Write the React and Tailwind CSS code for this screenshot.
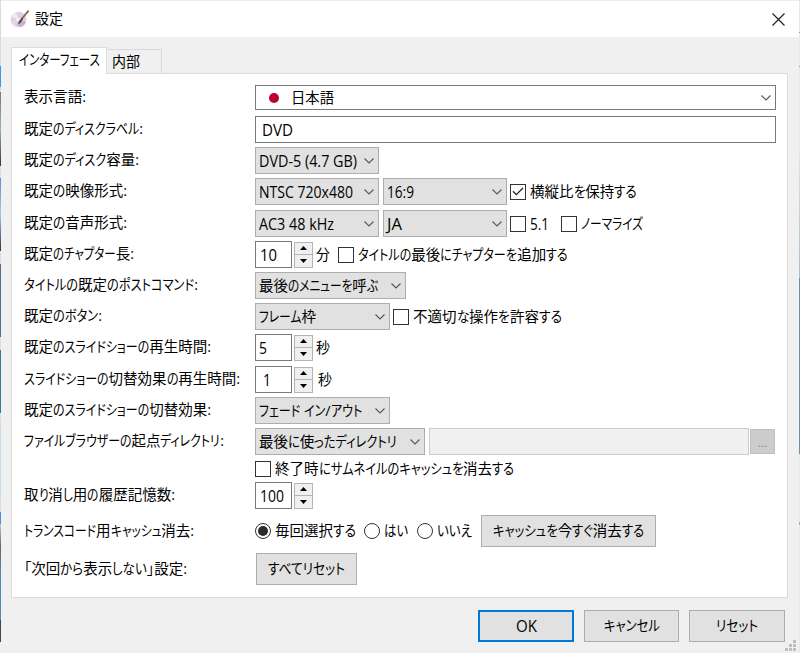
import { useLayoutEffect, useRef } from "react";

const KANA = /([\u3040-\u30ff]+)/;
const CJK = /[\u3000-\u9fff]/;

// One line of text set to a given width: kana runs are condensed, kanji keep their full width.
function T({ children, w, className = "" }) {
  const ref = useRef(null);
  const parts = children.split(KANA).filter(Boolean);
  const hasKana = KANA.test(children);
  const latin = !CJK.test(children) && children !== "...";

  useLayoutEffect(() => {
    const spans = [...ref.current.children];
    const inner = spans.map((s) => s.firstChild);
    inner.forEach((s) => {
      s.style.transform = "";
    });
    const widths = inner.map((s) => s.getBoundingClientRect().width);
    let flexible = 0;
    let fixed = 0;
    parts.forEach((p, i) => {
      if (!hasKana || KANA.test(p)) flexible += widths[i];
      else fixed += widths[i];
    });
    const scale = (w - fixed) / flexible;
    parts.forEach((p, i) => {
      if (!hasKana || KANA.test(p)) {
        inner[i].style.transform = `scaleX(${scale})`;
        spans[i].style.width = `${widths[i] * scale}px`;
      }
    });
  }, []);

  return (
    <span
      ref={ref}
      style={{ width: w }}
      className={`inline-flex shrink-0 whitespace-pre leading-5 ${latin ? "text-[15.5px]" : ""} ${className}`}
    >
      {parts.map((p, i) => (
        <span key={i} className="block shrink-0">
          <span className="inline-block origin-left whitespace-pre [font-feature-settings:'palt']">{p}</span>
        </span>
      ))}
    </span>
  );
}

function Chevron({ className = "" }) {
  return (
    <svg className={`ml-auto shrink-0 ${className}`} width="10" height="6" viewBox="0 0 10 6" fill="none" stroke="#555" strokeWidth="1.1">
      <path d="M.5 .5 5 5 9.5 .5" />
    </svg>
  );
}

function Select({ children, w, className }) {
  return (
    <div className={`flex h-[27px] shrink-0 items-center border border-[#adadad] bg-[#e1e1e1] pl-[3px] pr-1 ${className}`}>
      <T w={w}>{children}</T>
      <Chevron />
    </div>
  );
}

function Check({ children, w, checked, className = "" }) {
  return (
    <label className={`flex items-center gap-[4px] ${className}`}>
      <span className="flex size-4 shrink-0 items-center justify-center border border-[#333] bg-white">
        {checked && (
          <svg width="12" height="9" viewBox="0 0 12 9" fill="none" stroke="#222" strokeWidth="1.3">
            <path d="M1 4.2 4.3 7.6 11 1" />
          </svg>
        )}
      </span>
      <T w={w}>{children}</T>
    </label>
  );
}

function Radio({ children, w, checked, className = "" }) {
  return (
    <label className={`flex items-center gap-[4px] ${className}`}>
      <span className="flex size-4 shrink-0 items-center justify-center rounded-full border border-[#333] bg-white">
        {checked && <span className="size-[10px] rounded-full bg-[#2b2b2b]" />}
      </span>
      <T w={w}>{children}</T>
    </label>
  );
}

function Spin({ children, w, className = "" }) {
  return (
    <div className="flex items-center gap-[2px]">
      <div className={`flex h-[27px] w-[37px] items-center border border-[#7a7a7a] bg-white ${className}`}>
        <T w={w}>{children}</T>
      </div>
      <div className="flex h-[26px] w-[19px] flex-col border border-[#b4b4b4] bg-[#f0f0f0]">
        <div className="flex flex-1 items-center justify-center border-b border-[#b4b4b4]">
          <svg width="7" height="4" viewBox="0 0 7 4"><path d="M0 4 3.5 0 7 4Z" /></svg>
        </div>
        <div className="flex flex-1 items-center justify-center">
          <svg width="7" height="4" viewBox="0 0 7 4"><path d="M0 0H7L3.5 4Z" /></svg>
        </div>
      </div>
    </div>
  );
}

function Button({ children, w, className = "border border-[#adadad]" }) {
  return (
    <button className={`flex h-8 shrink-0 items-center justify-center bg-[#e1e1e1] ${className}`}>
      <T w={w}>{children}</T>
    </button>
  );
}

function Row({ label, w, children, className = "mb-1 h-[27px]" }) {
  return (
    <div className={`flex shrink-0 items-center ${className}`}>
      <div className="flex w-[231px] shrink-0 items-center pb-px">{label && <T w={w}>{label}</T>}</div>
      {children}
    </div>
  );
}

function AppIcon() {
  return (
    <svg width="20" height="18" viewBox="0 0 20 18">
      <circle cx="8.5" cy="9.5" r="7.8" fill="#ddd0e4" />
      <path d="M8.5 9.5 1 6.5A8 8 0 0 1 6 2Z" fill="#f0e9f2" />
      <path d="M8.5 9.5 16 12A8 8 0 0 1 9 17.3Z" fill="#c9aed6" />
      <path d="M8.5 9.5 1 12A8 8 0 0 0 5 16.6Z" fill="#e6d4ea" />
      <circle cx="8" cy="9.5" r="1.8" fill="#f7f4f8" />
      <path d="M18.6 0.6 12 8.6" stroke="#84644e" strokeWidth="1.7" />
      <path d="M12 7.4 9.2 11 7.4 15 10.8 12.6 13.2 9Z" fill="#5c443b" />
    </svg>
  );
}

export default function App() {
  return (
    <div className="flex h-[653px] w-[800px] overflow-hidden bg-[#f0f0f0] font-['Open_Sans','Noto_Sans_CJK_JP',sans-serif] text-[14.5px] text-black">
      <div className="flex w-px shrink-0 flex-col">
        <div className="h-[66px] bg-[#dedad5]" />
        <div className="h-[21px] bg-[#3b98ee]" />
        <div className="h-[5px] bg-[#ddd]" />
        <div className="h-[74px] bg-gradient-to-b from-[#777] via-[#9ab3bd] to-[#34363c]" />
        <div className="h-[12px] bg-[#ddd]" />
        <div className="h-[73px] bg-gradient-to-b from-[#4e91d0] via-[#aac7e5] to-[#303648]" />
        <div className="h-[13px] bg-[#ddd]" />
        <div className="h-[73px] bg-[#526c94]" />
        <div className="h-[13px] bg-[#ddd]" />
        <div className="h-[63px] bg-[#347da0]" />
        <div className="h-[13px] bg-[#ddd]" />
        <div className="h-[72px] bg-[#c4dce7]" />
        <div className="h-[14px] bg-[#ddd]" />
        <div className="h-[12px] bg-[#4a90d8]" />
        <div className="h-[48px] bg-gradient-to-b from-[#c8c8c8] via-[#6c6156] to-[#5288b5]" />
        <div className="h-[48px] bg-[#4b8cb8]" />
        <div className="h-[22px] bg-[#454545]" />
      </div>

      <div className="flex min-w-0 flex-1 flex-col border-t border-[#ececec]">
        <div className="flex h-9 shrink-0 items-center bg-white pl-[9px] pr-[14px]">
          <AppIcon />
          <T w={28} className="ml-[5px]">設定</T>
          <svg className="ml-auto" width="13" height="13" viewBox="0 0 13 13" stroke="#222" strokeWidth="1.2">
            <path d="M.5 .5 12.5 12.5M12.5 .5 .5 12.5" />
          </svg>
        </div>

        <div className="mt-[10px] flex h-[26px] shrink-0 items-end pl-[10px]">
          <div className="z-10 -mb-px flex h-[27px] w-[96px] items-center border border-b-0 border-[#dcdcdc] bg-white pb-[2px] pl-[7px]">
            <T w={81}>インターフェース</T>
          </div>
          <div className="flex h-[24px] w-[55px] items-center border border-b-0 border-l-0 border-[#d9d9d9] bg-[#f0f0f0] pl-[5px] pt-px">
            <T w={28}>内部</T>
          </div>
        </div>

        <div className="ml-[10px] mr-[11px] flex h-[525px] shrink-0 flex-col border border-[#dcdcdc] bg-white pl-[12px] pt-[11px]">
          <Row label="表示言語:" w={62} className="mb-[6px] h-[25px]">
            <div className="flex h-[25px] w-[521px] items-center border border-[#7a7a7a] bg-white pl-[13px] pr-[4px]">
              <span className="size-[10px] rounded-full bg-[#bc0030]" />
              <T w={43} className="ml-[12px]">日本語</T>
              <Chevron />
            </div>
          </Row>
          <Row label="既定のディスクラベル:" w={119}>
            <div className="flex h-[27px] w-[521px] items-center border border-[#7a7a7a] bg-white pl-[6px]">
              <T w={31}>DVD</T>
            </div>
          </Row>
          <Row label="既定のディスク容量:" w={115}>
            <Select w={98} className="w-[124px]">DVD-5 (4.7 GB)</Select>
          </Row>
          <Row label="既定の映像形式:" w={103} className="mb-[5px] h-[27px]">
            <Select w={94} className="w-[124px]">NTSC 720x480</Select>
            <Select w={27} className="ml-1 w-[124px]">16:9</Select>
            <Check checked w={107} className="ml-[3px]">横縦比を保持する</Check>
          </Row>
          <Row label="既定の音声形式:" w={103}>
            <Select w={75} className="w-[124px]">AC3 48 kHz</Select>
            <Select w={15} className="ml-1 w-[124px]">JA</Select>
            <Check w={19} className="ml-[3px]">5.1</Check>
            <Check w={62} className="ml-[12px]">ノーマライズ</Check>
          </Row>
          <Row label="既定のチャプター長:" w={110}>
            <Spin w={17} className="pl-1">10</Spin>
            <T w={14} className="ml-[3px]">分</T>
            <Check w={210} className="ml-2">タイトルの最後にチャプターを追加する</Check>
          </Row>
          <Row label="タイトルの既定のポストコマンド:" w={174}>
            <Select w={119} className="w-[151px]">最後のメニューを呼ぶ</Select>
          </Row>
          <Row label="既定のボタン:" w={78}>
            <Select w={57} className="w-[135px]">フレーム枠</Select>
            <Check w={149} className="ml-[3px]">不適切な操作を許容する</Check>
          </Row>
          <Row label="既定のスライドショーの再生時間:" w={187} className="mb-[5px] h-[27px]">
            <Spin w={8} className="pl-[3px]">5</Spin>
            <T w={14} className="ml-[3px]">秒</T>
          </Row>
          <Row label="スライドショーの切替効果の再生時間:" w={216}>
            <Spin w={8} className="pl-[7px]">1</Spin>
            <T w={14} className="ml-[5px]">秒</T>
          </Row>
          <Row label="既定のスライドショーの切替効果:" w={187}>
            <Select w={103} className="w-[135px]">フェード イン/アウト</Select>
          </Row>
          <Row label="ファイルブラウザーの起点ディレクトリ:" w={200}>
            <Select w={138} className="w-[170px]">最後に使ったディレクトリ</Select>
            <div className="ml-1 h-[27px] w-[320px] border border-[#ccc] bg-[#f0f0f0]" />
            <div className="ml-px flex h-[25px] w-[25px] items-center justify-center border border-[#bfbfbf] bg-[#ccc] pt-[3px] text-[11px] text-[#838383]">
              <T w={9}>...</T>
            </div>
          </Row>
          <Row className="mb-[5px] mt-[2px] h-4">
            <Check w={239}>終了時にサムネイルのキャッシュを消去する</Check>
          </Row>
          <Row label="取り消し用の履歴記憶数:" w={151} className="h-[27px] mb-[6px]">
            <Spin w={24} className="pl-1">100</Spin>
          </Row>
          <Row label="トランスコード用キャッシュ消去:" w={170} className="mb-[6px] h-8">
            <Radio checked w={81}>毎回選択する</Radio>
            <Radio w={24} className="ml-[8px]">はい</Radio>
            <Radio w={35} className="ml-[9px]">いいえ</Radio>
            <Button w={151} className="ml-[9px] w-[175px] border border-[#adadad]">キャッシュを今すぐ消去する</Button>
          </Row>
          <Row label="「次回から表示しない」設定:" w={163} className="h-8">
            <Button w={77} className="ml-px w-[101px] border border-[#adadad]">すべてリセット</Button>
          </Row>
        </div>

        <div className="mt-3 flex gap-[10px] self-end pr-[14px]">
          <Button w={21} className="w-24 border-2 border-[#0078d7]">OK</Button>
          <Button w={56} className="w-[95px] border border-[#adadad]">キャンセル</Button>
          <Button w={42} className="w-24 border border-[#adadad]">リセット</Button>
        </div>
        <svg className="-mt-[2px] mr-[3px] self-end" width="11" height="11" viewBox="0 0 11 11" fill="#bfbfbf">
          <path d="M8 0h3v3H8zM4 4h3v3H4zM8 4h3v3H8zM0 8h3v3H0zM4 8h3v3H4zM8 8h3v3H8z" />
        </svg>
      </div>

      <div className="flex w-px shrink-0 flex-col bg-[#e8e8e8]">
        <div className="mt-8 h-px bg-[#999]" />
        <div className="mt-[33px] h-px bg-[#999]" />
        <div className="mt-[85px] h-[126px] bg-gradient-to-b from-[#dde4e8] to-[#a4bfcd]" />
        <div className="h-[176px] bg-[#5e92b5]" />
        <div className="mt-[68px] h-[3px] bg-[#aaa]" />
      </div>
    </div>
  );
}
